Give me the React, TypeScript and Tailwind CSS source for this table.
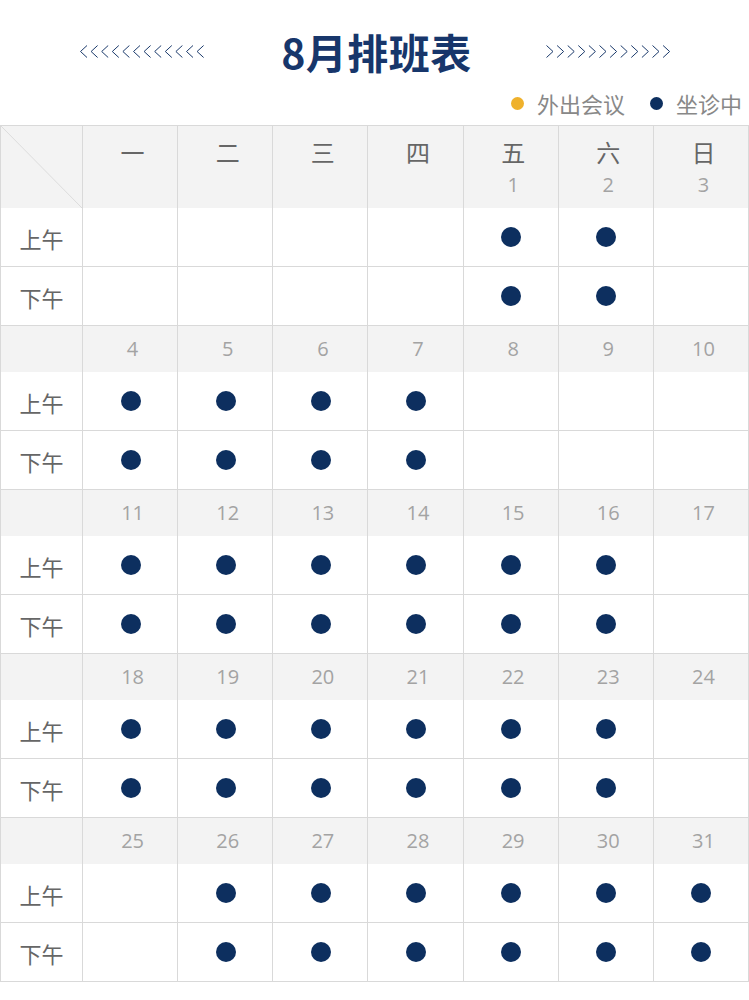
import React from 'react';

const NAVY = 'bg-[#0d2f5f]';

const weekdays = ['一', '二', '三', '四', '五', '六', '日'];

interface Week {
  dates: (number | null)[];
  am: number[];
  pm: number[];
}

const weeks: Week[] = [
  { dates: [null, null, null, null, 1, 2, 3], am: [0, 0, 0, 0, 1, 1, 0], pm: [0, 0, 0, 0, 1, 1, 0] },
  { dates: [4, 5, 6, 7, 8, 9, 10], am: [1, 1, 1, 1, 0, 0, 0], pm: [1, 1, 1, 1, 0, 0, 0] },
  { dates: [11, 12, 13, 14, 15, 16, 17], am: [1, 1, 1, 1, 1, 1, 0], pm: [1, 1, 1, 1, 1, 1, 0] },
  { dates: [18, 19, 20, 21, 22, 23, 24], am: [1, 1, 1, 1, 1, 1, 0], pm: [1, 1, 1, 1, 1, 1, 0] },
  { dates: [25, 26, 27, 28, 29, 30, 31], am: [0, 1, 1, 1, 1, 1, 1], pm: [0, 1, 1, 1, 1, 1, 1] },
];

function Chevrons({ dir }: { dir: 'left' | 'right' }) {
  const items = Array.from({ length: 12 }, (_, i) => i);
  return (
    <svg width="127" height="13" viewBox="0 0 127 13" fill="none" stroke="#1b3a6b" strokeWidth={1}>
      {items.map((i) => {
        const x = i * 10.6 + 0.5;
        const d =
          dir === 'left'
            ? `M${x + 6.5} 0.5 L${x} 6.5 L${x + 6.5} 12.5`
            : `M${x} 0.5 L${x + 6.5} 6.5 L${x} 12.5`;
        return <path key={i} d={d} />;
      })}
    </svg>
  );
}

function Dot() {
  return <span className={`block w-5 h-5 rounded-full ${NAVY}`} />;
}

function SlotRow({ label, marks }: { label: string; marks: number[] }) {
  return (
    <>
      <div className="h-[59px] flex items-center justify-center pt-[4px] border-r border-b border-[#d9d9d9] text-[22px] text-[#666]">
        {label}
      </div>
      {marks.map((m, i) => (
        <div key={i} className="h-[59px] flex items-center justify-center pl-[1px] border-r border-b border-[#d9d9d9]">
          {m ? <Dot /> : null}
        </div>
      ))}
    </>
  );
}

export default function App() {
  return (
    <div className="w-[749px] bg-white font-['Open_Sans','Noto_Sans_CJK_SC',sans-serif]">
      <div className="h-[92px] pt-[21px] flex items-start justify-center">
        <div className="flex items-center gap-[74px] h-[60px] pl-[4px]">
          <Chevrons dir="left" />
          <h1 className="text-[41px] leading-none font-bold text-[#17366b] font-['Noto_Sans_CJK_SC',sans-serif] tracking-[0.5px]">
            8月排班表
          </h1>
          <Chevrons dir="right" />
        </div>
      </div>

      <div className="h-[33px] flex items-start justify-end pr-[7px] gap-[25px] text-[22px] leading-[22px] text-[#888] font-['Noto_Sans_CJK_SC',sans-serif]">
        <div className="flex items-center gap-[13px]">
          <span className="block w-[13px] h-[13px] rounded-full bg-[#efb12c]" />
          <span>外出会议</span>
        </div>
        <div className="flex items-center gap-[13px]">
          <span className={`block w-[13px] h-[13px] rounded-full ${NAVY}`} />
          <span>坐诊中</span>
        </div>
      </div>

      <div className="grid grid-cols-[82px_repeat(7,1fr)] border-l border-t border-[#d9d9d9]">
        {/* header */}
        <div className="relative h-[82px] bg-[#f3f3f3] border-r border-[#d9d9d9]">
          <svg className="absolute inset-0 w-full h-full" viewBox="0 0 81 82" preserveAspectRatio="none">
            <line x1="0" y1="0" x2="81" y2="82" stroke="#dcdcdc" strokeWidth={1} />
          </svg>
        </div>
        {weekdays.map((w, i) => (
          <div key={w} className="h-[82px] bg-[#f3f3f3] border-r border-[#d9d9d9] flex flex-col items-center pt-[11px] pl-[5px]">
            <span className="text-[24px] leading-[32px] text-[#666]">{w}</span>
            <span className="text-[20px] leading-[28px] text-[#a3a3a3] mt-[2px]">{weeks[0].dates[i] ?? ''}</span>
          </div>
        ))}
        <SlotRow label="上午" marks={weeks[0].am} />
        <SlotRow label="下午" marks={weeks[0].pm} />

        {weeks.slice(1).map((wk, wi) => (
          <React.Fragment key={wi}>
            <div className="h-[46px] bg-[#f3f3f3] border-r border-[#d9d9d9]" />
            {wk.dates.map((d, i) => (
              <div
                key={i}
                className="h-[46px] bg-[#f3f3f3] border-r border-[#d9d9d9] flex items-center justify-center pl-[5px] text-[20px] text-[#a3a3a3]"
              >
                {d}
              </div>
            ))}
            <SlotRow label="上午" marks={wk.am} />
            <SlotRow label="下午" marks={wk.pm} />
          </React.Fragment>
        ))}
      </div>
    </div>
  );
}
